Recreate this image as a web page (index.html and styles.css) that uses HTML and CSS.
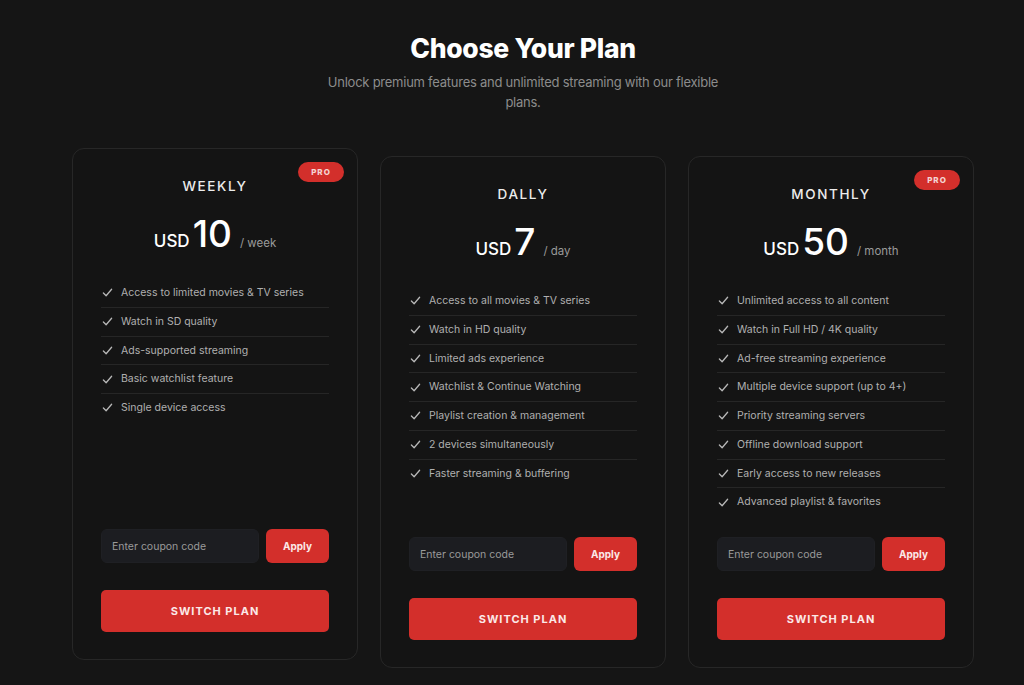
FILE: index.html
```html
<!DOCTYPE html>
<html lang="en">
<head>
<meta charset="utf-8">
<title>Choose Your Plan</title>
<link rel="stylesheet" href="styles.css">
</head>
<body>
<main class="page">
  <header class="head">
    <h1 class="title">Choose Your Plan</h1>
    <p class="subtitle">Unlock premium features and unlimited streaming with our flexible plans.</p>
  </header>
  <section class="plans">
    <article class="card card-raised">
      <span class="badge">PRO</span>
      <h2 class="plan-name">WEEKLY</h2>
      <div class="price"><span class="cur">USD</span><span class="amt">10</span><span class="per">/ week</span></div>
      <ul class="features">
        <li><svg class="check" viewBox="0 0 12 12"><path d="M1.5 6.5 L4.5 9.5 L10.5 2.5"/></svg>Access to limited movies &amp; TV series</li>
        <li><svg class="check" viewBox="0 0 12 12"><path d="M1.5 6.5 L4.5 9.5 L10.5 2.5"/></svg>Watch in SD quality</li>
        <li><svg class="check" viewBox="0 0 12 12"><path d="M1.5 6.5 L4.5 9.5 L10.5 2.5"/></svg>Ads-supported streaming</li>
        <li><svg class="check" viewBox="0 0 12 12"><path d="M1.5 6.5 L4.5 9.5 L10.5 2.5"/></svg>Basic watchlist feature</li>
        <li><svg class="check" viewBox="0 0 12 12"><path d="M1.5 6.5 L4.5 9.5 L10.5 2.5"/></svg>Single device access</li>
      </ul>
      <div class="coupon">
        <input class="coupon-input" type="text" placeholder="Enter coupon code">
        <button class="apply">Apply</button>
      </div>
      <button class="switch">SWITCH PLAN</button>
    </article>
    <article class="card">
      <h2 class="plan-name">DALLY</h2>
      <div class="price"><span class="cur">USD</span><span class="amt">7</span><span class="per">/ day</span></div>
      <ul class="features">
        <li><svg class="check" viewBox="0 0 12 12"><path d="M1.5 6.5 L4.5 9.5 L10.5 2.5"/></svg>Access to all movies &amp; TV series</li>
        <li><svg class="check" viewBox="0 0 12 12"><path d="M1.5 6.5 L4.5 9.5 L10.5 2.5"/></svg>Watch in HD quality</li>
        <li><svg class="check" viewBox="0 0 12 12"><path d="M1.5 6.5 L4.5 9.5 L10.5 2.5"/></svg>Limited ads experience</li>
        <li><svg class="check" viewBox="0 0 12 12"><path d="M1.5 6.5 L4.5 9.5 L10.5 2.5"/></svg>Watchlist &amp; Continue Watching</li>
        <li><svg class="check" viewBox="0 0 12 12"><path d="M1.5 6.5 L4.5 9.5 L10.5 2.5"/></svg>Playlist creation &amp; management</li>
        <li><svg class="check" viewBox="0 0 12 12"><path d="M1.5 6.5 L4.5 9.5 L10.5 2.5"/></svg>2 devices simultaneously</li>
        <li><svg class="check" viewBox="0 0 12 12"><path d="M1.5 6.5 L4.5 9.5 L10.5 2.5"/></svg>Faster streaming &amp; buffering</li>
      </ul>
      <div class="coupon">
        <input class="coupon-input" type="text" placeholder="Enter coupon code">
        <button class="apply">Apply</button>
      </div>
      <button class="switch">SWITCH PLAN</button>
    </article>
    <article class="card">
      <span class="badge">PRO</span>
      <h2 class="plan-name">MONTHLY</h2>
      <div class="price"><span class="cur">USD</span><span class="amt">50</span><span class="per">/ month</span></div>
      <ul class="features">
        <li><svg class="check" viewBox="0 0 12 12"><path d="M1.5 6.5 L4.5 9.5 L10.5 2.5"/></svg>Unlimited access to all content</li>
        <li><svg class="check" viewBox="0 0 12 12"><path d="M1.5 6.5 L4.5 9.5 L10.5 2.5"/></svg>Watch in Full HD / 4K quality</li>
        <li><svg class="check" viewBox="0 0 12 12"><path d="M1.5 6.5 L4.5 9.5 L10.5 2.5"/></svg>Ad-free streaming experience</li>
        <li><svg class="check" viewBox="0 0 12 12"><path d="M1.5 6.5 L4.5 9.5 L10.5 2.5"/></svg>Multiple device support (up to 4+)</li>
        <li><svg class="check" viewBox="0 0 12 12"><path d="M1.5 6.5 L4.5 9.5 L10.5 2.5"/></svg>Priority streaming servers</li>
        <li><svg class="check" viewBox="0 0 12 12"><path d="M1.5 6.5 L4.5 9.5 L10.5 2.5"/></svg>Offline download support</li>
        <li><svg class="check" viewBox="0 0 12 12"><path d="M1.5 6.5 L4.5 9.5 L10.5 2.5"/></svg>Early access to new releases</li>
        <li><svg class="check" viewBox="0 0 12 12"><path d="M1.5 6.5 L4.5 9.5 L10.5 2.5"/></svg>Advanced playlist &amp; favorites</li>
      </ul>
      <div class="coupon">
        <input class="coupon-input" type="text" placeholder="Enter coupon code">
        <button class="apply">Apply</button>
      </div>
      <button class="switch">SWITCH PLAN</button>
    </article>
  </section>
</main>
</body>
</html>
```
FILE: styles.css
```css
* { box-sizing: border-box; }
html, body { margin: 0; padding: 0; }
body {
  background: #151515;
  color: #fff;
  font-family: Inter, "Noto Sans", "Liberation Sans", sans-serif;
  overflow: hidden;
  height: 685px;
}
.page {
  padding: 30px 0 0 22px;
}
.head {
  text-align: center;
}
.title {
  margin: 0;
  font-size: 26.5px;
  line-height: 36px;
  font-weight: 800;
  letter-spacing: -0.3px;
  color: #fff;
}
.subtitle {
  margin: 6px auto 0;
  max-width: 400px;
  font-size: 13px;
  line-height: 20px;
  letter-spacing: -0.25px;
  color: #8c8c8c;
}
.plans {
  width: 902px;
  margin: 44px auto 0;
  display: grid;
  grid-template-columns: repeat(3, 286px);
  gap: 22px;
  align-items: stretch;
}
.card {
  position: relative;
  background: #141414;
  border: 1px solid #272727;
  border-radius: 12px;
  padding: 27px 28px 27px;
  display: flex;
  flex-direction: column;
  height: 512px;
}
.card-raised {
  transform: translateY(-8px);
}
.badge {
  position: absolute;
  top: 13px;
  right: 13px;
  width: 46px;
  height: 20px;
  border-radius: 10px;
  background: #d32f2b;
  color: #f4d4d2;
  font-size: 8px;
  font-weight: 800;
  letter-spacing: 1px;
  display: flex;
  align-items: center;
  justify-content: center;
}
.plan-name {
  margin: 0;
  text-align: center;
  font-size: 13.5px;
  line-height: 20px;
  font-weight: 500;
  letter-spacing: 1.6px;
  color: #ececec;
}
.price {
  margin-top: 16px;
  display: flex;
  align-items: baseline;
  justify-content: center;
  line-height: 44px;
  height: 44px;
}
.cur {
  font-size: 17px;
  font-weight: 500;
  color: #fff;
  margin-right: 3px;
}
.amt {
  font-size: 37px;
  font-weight: 500;
  color: #fff;
  margin-right: 8px;
}
.per {
  font-size: 11.5px;
  color: #9a9a9a;
}
.features {
  list-style: none;
  margin: 23px 0 0;
  padding: 0;
}
.features li {
  display: flex;
  align-items: center;
  font-size: 10.5px;
  line-height: 15.75px;
  color: #b0b0b0;
  padding: 6px 0 6px 1px;
  border-bottom: 1px solid #262626;
}
.features li:last-child {
  border-bottom: none;
}
.check {
  width: 11px;
  height: 11px;
  margin-right: 8px;
  flex: none;
  fill: none;
  stroke: #b8b8b8;
  stroke-width: 1.4;
  stroke-linecap: round;
  stroke-linejoin: round;
}
.coupon {
  margin-top: auto;
  display: flex;
  gap: 7px;
  height: 34px;
}
.coupon-input {
  flex: 1;
  min-width: 0;
  background: #1c1d21;
  border: 1px solid #1f2024;
  border-radius: 6px;
  padding: 0 10px;
  font-family: inherit;
  font-size: 10.5px;
  color: #ddd;
  outline: none;
}
.coupon-input::placeholder {
  color: #9a9a9a;
}
.apply {
  width: 63px;
  border: none;
  border-radius: 6px;
  background: #d32f2b;
  color: #fbe9e8;
  font-family: inherit;
  font-size: 10px;
  font-weight: 700;
  cursor: pointer;
}
.switch {
  margin-top: 27px;
  height: 42px;
  width: 100%;
  border: none;
  border-radius: 5px;
  background: #d32f2b;
  color: #fbe9e8;
  font-family: inherit;
  font-size: 11px;
  font-weight: 700;
  letter-spacing: 1px;
  cursor: pointer;
}
```
